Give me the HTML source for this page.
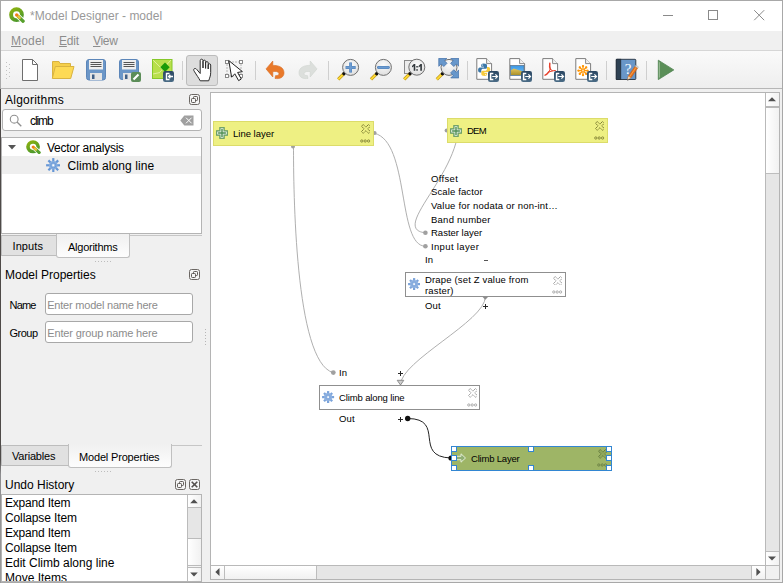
<!DOCTYPE html>
<html>
<head>
<meta charset="utf-8">
<title>Model Designer</title>
<style>
html,body{margin:0;padding:0;}
body{width:783px;height:583px;overflow:hidden;background:#f0f0f0;font-family:"Liberation Sans",sans-serif;font-size:12px;color:#000;position:relative;}
.abs{position:absolute;}
.t{position:absolute;white-space:nowrap;line-height:14px;font-size:12px;}
#win{position:absolute;left:0;top:0;width:783px;height:583px;box-sizing:border-box;border:1px solid #a8a8a8;}
#titlebar{position:absolute;left:1px;top:1px;width:781px;height:30px;background:#fff;}
#menubar{position:absolute;left:1px;top:31px;width:781px;height:19px;background:#f0f0f0;}
#toolbar{position:absolute;left:1px;top:50px;width:781px;height:39px;background:linear-gradient(#fafafa,#eeeeee);border-bottom:1px solid #b6b6b6;border-top:1px solid #d6d6d6;box-sizing:border-box;}
.menu{color:#8c8c8c;}
.sep{position:absolute;top:61px;width:1px;height:19px;background:#cfcfcf;}
.ico{position:absolute;top:58px;width:24px;height:24px;}
.panelwhite{position:absolute;background:#fff;border:1px solid #a9a9a9;box-sizing:border-box;}
.tab{position:absolute;box-sizing:border-box;border:1px solid #bdbdbd;text-align:center;font-size:12px;line-height:14px;}
.tab.off{background:#e1e1e1;border-color:#bdbdbd;}
.tab.on{background:#f6f6f6;border-bottom:none;border-radius:2px 2px 0 0;}
.le{position:absolute;box-sizing:border-box;border:1px solid #a8a8a8;border-radius:3px;background:#fff;}
.ct{position:absolute;white-space:nowrap;font-size:9.5px;line-height:12px;color:#000;}
.hd{position:absolute;width:6px;height:6px;box-sizing:border-box;border:1px solid #3286d2;background:#fff;}
</style>
</head>
<body>
<div id="win"></div>
<div id="titlebar"></div>
<div id="menubar"></div>
<div id="toolbar"></div>
<div class="abs" style="left:0;top:89px;width:1px;height:494px;background:linear-gradient(#4e4a48 0,#4e4a48 75%,#8e8e90 78%,#9a9a9a 100%)"></div>

<!-- TITLE -->
<svg class="abs" style="left:9px;top:7px" width="16" height="16" viewBox="0 0 16 16"><defs><linearGradient id="qg1" x1="0" y1="0" x2="0.600" y2="1"><stop offset="0" stop-color="#8bb111"/><stop offset="1" stop-color="#4f9a2a"/></linearGradient></defs>
  <circle cx="7.500" cy="7.700" r="5.400" fill="none" stroke="url(#qg1)" stroke-width="3.900"/>
  <path d="M8 8.200 L14.300 14.300" stroke="#fff" stroke-width="5" stroke-linecap="butt"/>
  <path d="M9.400 9.600 L14.100 14.200" stroke="#57a02c" stroke-width="3.300" stroke-linecap="round"/>
  <path d="M8.300 8.500 L10.600 10.800" stroke="#e9c53a" stroke-width="2.600" stroke-linecap="round"/>
  <circle cx="7.700" cy="7.900" r="1.700" fill="#f07d16"/>
</svg>
<div class="t" id="title" style="left:30px;top:9px;color:#999;">*Model Designer - model</div>
<!-- window controls -->
<div class="abs" style="left:663px;top:15px;width:10px;height:1px;background:#8a8a8a"></div>
<div class="abs" style="left:708px;top:10px;width:10px;height:10px;box-sizing:border-box;border:1px solid #8a8a8a"></div>
<svg class="abs" style="left:753px;top:9px" width="12" height="12" viewBox="0 0 12 12"><path d="M1.2 1.2 L11.2 11.2 M11.2 1.2 L1.2 11.2" stroke="#8a8a8a" stroke-width="1" fill="none"/></svg>

<!-- MENU -->
<div class="t menu" id="m1" style="left:11px;top:34px;letter-spacing:0.18px;"><u>M</u>odel</div>
<div class="t menu" id="m2" style="left:59px;top:34px;letter-spacing:-0.2px;"><u>E</u>dit</div>
<div class="t menu" id="m3" style="left:93px;top:34px;letter-spacing:-0.33px;"><u>V</u>iew</div>


<!-- toolbar grip -->
<svg class="abs" style="left:6px;top:61px" width="5" height="18" viewBox="0 0 5 18">
<g fill="#c2c2c2"><rect x="0" y="1" width="1" height="1"/><rect x="0" y="5" width="1" height="1"/><rect x="0" y="9" width="1" height="1"/><rect x="0" y="13" width="1" height="1"/><rect x="0" y="17" width="1" height="1"/>
<rect x="3" y="3" width="1" height="1"/><rect x="3" y="7" width="1" height="1"/><rect x="3" y="11" width="1" height="1"/><rect x="3" y="15" width="1" height="1"/></g></svg>

<!-- new -->
<svg class="ico" style="left:18px" viewBox="0 0 24 24"><path d="M4.5 1.5 H14.5 L19.5 6.5 V22.5 H4.5 Z" fill="#fff" stroke="#6e6e6e" stroke-width="1"/><path d="M14.5 1.5 V6.5 H19.5" fill="none" stroke="#6e6e6e" stroke-width="1"/></svg>
<!-- open -->
<svg class="ico" style="left:51px" viewBox="0 0 24 24"><path d="M1.5 20 V3.5 H8 L9 5.5 H19.5 V9" fill="#f5cf4a" stroke="#d9b341" stroke-width="1"/><path d="M1.3 20.5 L4.3 8.5 H23 L19.7 20.5 Z" fill="#fdda55" stroke="#d9b341" stroke-width="1" stroke-linejoin="round"/></svg>
<!-- save -->
<svg class="ico" style="left:84px" viewBox="0 0 24 24"><rect x="2.5" y="1.5" width="19" height="20.5" rx="2.5" fill="#6b96c7" stroke="#5c86b9"/><rect x="5" y="2" width="14" height="9.5" fill="#efefef"/><path d="M6.5 4.5 H17.5 M6.5 6.5 H17.5 M6.5 8.5 H17.5" stroke="#555" stroke-width="1"/><rect x="6" y="15" width="12" height="7" fill="#e4e4e4"/><rect x="8" y="16.5" width="2.5" height="4.5" fill="#3f5f86"/></svg>
<!-- save as -->
<svg class="ico" style="left:117px" viewBox="0 0 24 24"><rect x="2.5" y="1.5" width="19" height="20" rx="2.5" fill="#6b96c7" stroke="#5c86b9"/><rect x="5" y="2" width="14" height="9.5" fill="#efefef"/><path d="M6.5 4.5 H17.5 M6.5 6.5 H17.5 M6.5 8.5 H17.5" stroke="#555" stroke-width="1"/><rect x="6" y="15" width="12" height="7" fill="#e4e4e4"/><rect x="8" y="16.5" width="2.5" height="4.5" fill="#3f5f86"/><rect x="14" y="14" width="10" height="10" rx="2" fill="#5b8d58"/><path d="M16.5 21.5 L21.5 16.5" stroke="#fff" stroke-width="2.2"/></svg>
<!-- save in project -->
<svg class="ico" style="left:150px" viewBox="0 0 24 24"><rect x="2.5" y="1.5" width="19.5" height="19" fill="#b8df4c" stroke="#86c82a"/><path d="M3 2 L14 13 M3 16 L10 14.5 M21 2 L10 14" stroke="#dff09a" stroke-width="1" fill="none"/><path d="M15 4.5 L19.7 9.2 L15 13.9 L10.3 9.2 Z" fill="#1a9a08"/><rect x="13" y="13" width="11" height="11" rx="2.200" fill="url(#bdg)"/><path d="M19.5 15.5 H16.5 V21.5 H19.5" stroke="#fff" stroke-width="1.4" fill="none"/><path d="M23 18.5 H18.8 M20.3 16.8 L18.6 18.5 L20.3 20.2" stroke="#fff" stroke-width="1.3" fill="none"/></svg>
<div class="sep" style="left:182px"></div>
<!-- pan (active) -->
<div class="abs" style="left:186px;top:55px;width:32px;height:31px;box-sizing:border-box;border:1px solid #bcbcbc;border-radius:3px;background:#dddddd"></div>
<svg class="ico" style="left:190px" viewBox="0 0 24 24"><path d="M10.2 12 V2.6 C10.2 0.7 13 0.7 13 2.6 V10 V3.4 C13 1.7 15.6 1.7 15.6 3.4 V10.4 V4.8 C15.6 3.2 18.2 3.2 18.2 4.8 V11 V7 C18.2 5.4 20.7 5.4 20.7 7 V14.5 C20.7 18 19.5 20 18.7 22.8 H10.2 C8.8 20 6.5 17 4.2 13.2 C2.6 10.8 5.3 9.4 6.9 11.6 L10.2 15.5 Z" fill="#fff" stroke="#2a2a2a" stroke-width="1" stroke-linejoin="round"/></svg>
<!-- select -->
<svg class="ico" style="left:223px" viewBox="0 0 24 24"><path d="M6.500 4 H16 M18 6.500 V16 M4 6.500 V16 M6.500 18 H12" stroke="#777" stroke-width="1" stroke-dasharray="1 2" fill="none"/><g fill="#fff" stroke="#7d7d7d" stroke-width="0.900"><rect x="2.500" y="2.500" width="3" height="3"/><rect x="16.500" y="2.500" width="3" height="3"/><rect x="2.500" y="16.500" width="3" height="3"/><rect x="16.500" y="16.500" width="3" height="3"/></g><path d="M5.800 2.600 L8.600 19.200 L11.800 15.800 L15.600 22.600 L18.300 21 L14.600 14.500 L19.400 13.600 Z" fill="#fff" stroke="#222" stroke-width="1" stroke-linejoin="round"/></svg>
<div class="sep" style="left:255px"></div>
<!-- undo -->
<svg class="ico" style="left:263px" viewBox="0 0 24 24"><path d="M9.800 3 L3 10.900 L9.800 19 V13.600 C12.500 13.200 15.600 13.400 15.900 15.400 C16 17 14.600 17.800 12.600 17.600 L12 20.400 C16.500 21.300 21 19.500 21 14.800 C21 9.500 16 7.200 9.800 7.400 Z" fill="#e9792a" stroke="#d96c22" stroke-width="0.6" stroke-linejoin="round"/></svg>
<!-- redo -->
<svg class="ico" style="left:296px" viewBox="0 0 24 24"><path d="M14.2 3 L21 10.9 L14.2 19 V13.6 C11.5 13.2 8.4 13.4 8.1 15.4 C8 17 9.4 17.8 11.4 17.6 L12 20.4 C7.5 21.3 3 19.5 3 14.8 C3 9.5 8 7.2 14.2 7.4 Z" fill="#dcdfdc" stroke="#cfd3cf" stroke-width="0.6" stroke-linejoin="round"/></svg>
<div class="sep" style="left:328px"></div>


<svg width="0" height="0" class="abs"><defs><linearGradient id="bdg" x1="0" y1="0" x2="0" y2="1"><stop offset="0" stop-color="#2a4662"/><stop offset="1" stop-color="#4a6c86"/></linearGradient><radialGradient id="lg" cx="0.5" cy="0.35" r="0.7"><stop offset="0" stop-color="#fbfbfb"/><stop offset="1" stop-color="#dcdcdc"/></radialGradient></defs></svg>
<!-- zoom in -->
<svg class="ico" style="left:336px" viewBox="0 0 24 24"><path d="M7.9 15.7 L2.2 21.4" stroke="#b8900f" stroke-width="3.100" stroke-linecap="butt"/><path d="M7.9 15.7 L2.2 21.4" stroke="#fdd835" stroke-width="2" stroke-linecap="butt"/><circle cx="7.9" cy="15.7" r="1.7" fill="#111"/><circle cx="14.6" cy="9.4" r="8" fill="url(#lg)" stroke="#6f6f6f" stroke-width="1"/><path d="M9.600 9.500 H19.600 M14.600 4.500 V14.500" stroke="#4d7fb8" stroke-width="2.800"/><path d="M9.900 9.500 H19.300 M14.600 4.800 V14.200" stroke="#6c9bd0" stroke-width="1.800"/></svg>
<!-- zoom out -->
<svg class="ico" style="left:369px" viewBox="0 0 24 24"><path d="M7.7 15.7 L2 21.4" stroke="#b8900f" stroke-width="3.100" stroke-linecap="butt"/><path d="M7.7 15.7 L2 21.4" stroke="#fdd835" stroke-width="2" stroke-linecap="butt"/><circle cx="7.7" cy="15.7" r="1.7" fill="#111"/><circle cx="14.4" cy="9.4" r="8" fill="url(#lg)" stroke="#6f6f6f" stroke-width="1"/><path d="M9.400 9.500 H19.400" stroke="#4d7fb8" stroke-width="2.800" stroke-linecap="round"/><path d="M9.600 9.500 H19.200" stroke="#6c9bd0" stroke-width="1.800" stroke-linecap="round"/></svg>
<!-- zoom actual -->
<svg class="ico" style="left:402px" viewBox="0 0 24 24"><rect x="2.5" y="2.5" width="9" height="13" fill="#ececec" stroke="#8a8a8a"/><path d="M8 15.7 L2.2 21.4" stroke="#b8900f" stroke-width="3.100" stroke-linecap="butt"/><path d="M8 15.7 L2.2 21.4" stroke="#fdd835" stroke-width="2" stroke-linecap="butt"/><circle cx="8" cy="15.7" r="1.7" fill="#111"/><circle cx="14.8" cy="9.2" r="8" fill="url(#lg)" stroke="#6f6f6f" stroke-width="1"/><path d="M10.0 8.0 L11.9 6.1 H13.3 V12.7 H11.7 V8.2 L10.0 9.4 Z M16.6 8.0 L18.5 6.1 H19.9 V12.7 H18.3 V8.2 L16.6 9.4 Z" fill="#30363a"/><rect x="14.300" y="8" width="1.500" height="1.500" fill="#30363a"/><rect x="14.300" y="11.200" width="1.500" height="1.500" fill="#30363a"/></svg>
<!-- zoom full -->
<svg class="ico" style="left:435px" viewBox="0 0 24 24"><path d="M7.5 15.7 L1.8 21.4" stroke="#b8900f" stroke-width="3.100" stroke-linecap="butt"/><path d="M7.5 15.7 L1.8 21.4" stroke="#fdd835" stroke-width="2" stroke-linecap="butt"/><circle cx="7.5" cy="15.7" r="1.7" fill="#111"/><circle cx="14" cy="9.4" r="8" fill="url(#lg)" stroke="#6f6f6f" stroke-width="1"/><g fill="#6797cb" stroke="#4874ab" stroke-width="0.800" stroke-linejoin="round"><path d="M3.8 0.3 L11.8 0.3 L9.4 2.7 L12.0 5.3 L8.8 8.5 L6.2 5.9 L3.8 8.3 Z"/><path d="M23.8 0.3 L15.8 0.3 L18.2 2.7 L15.6 5.3 L18.8 8.5 L21.4 5.9 L23.8 8.3 Z"/><path d="M23.8 19.9 L15.8 19.9 L18.2 17.5 L15.6 14.9 L18.8 11.7 L21.4 14.3 L23.8 11.9 Z"/></g></svg>
<div class="sep" style="left:467px"></div>
<!-- export python -->
<svg class="ico" style="left:475px" viewBox="0 0 24 24"><path d="M1.800 0.600 H11.600 L16.600 5.600 V21.300 H1.800 Z" fill="#fff" stroke="#7d7d7d" stroke-width="1"/><path d="M11.600 0.600 V5.600 H16.600" fill="#f2f2f2" stroke="#7d7d7d" stroke-width="0.900"/><path d="M8.700 5.500 C6.300 5.500 6.200 6.600 6.200 7.400 V8.800 H9 V9.400 H5 C3.300 9.400 3.100 11 3.100 12 C3.100 13.200 3.500 14.600 5 14.600 H6.300 V12.600 C6.300 11.400 7.200 10.800 8.200 10.800 H10.600 C11.600 10.800 12 10 12 9.200 V7.400 C12 6.200 11 5.500 8.700 5.500 Z" fill="#3b77a8"/><path d="M9.600 18 C12 18 12.100 16.900 12.100 16.100 V14.700 H9.300 V14.100 H13.300 C15 14.100 15.200 12.500 15.200 11.500 C15.200 10.300 14.800 8.900 13.300 8.900 H12 V10.900 C12 12.100 11.100 12.700 10.100 12.700 H7.700 C6.700 12.700 6.300 13.500 6.300 14.300 V16.100 C6.300 17.300 7.300 18 9.600 18 Z" fill="#f7cb3e"/><circle cx="7.600" cy="7" r="0.600" fill="#fff"/><circle cx="10.700" cy="16.500" r="0.600" fill="#fff"/><rect x="13" y="13" width="11" height="11" rx="2.200" fill="url(#bdg)"/><path d="M18.3 15.6 H15.6 V21.4 H18.3" stroke="#fff" stroke-width="1.5" fill="none"/><path d="M17.2 18.5 H22.4 M20.4 16.4 L22.5 18.5 L20.4 20.6" stroke="#fff" stroke-width="1.2" fill="none"/></svg>
<!-- export image -->
<svg class="ico" style="left:508px" viewBox="0 0 24 24"><path d="M1.800 0.600 H11.600 L16.600 5.600 V21.300 H1.800 Z" fill="#fff" stroke="#7d7d7d" stroke-width="1"/><path d="M11.600 0.600 V5.600 H16.600" fill="#f2f2f2" stroke="#7d7d7d" stroke-width="0.900"/><defs><linearGradient id="sky" x1="0" y1="0" x2="0" y2="1"><stop offset="0" stop-color="#3a97e6"/><stop offset="1" stop-color="#7fc4f3"/></linearGradient><linearGradient id="land" x1="0" y1="0" x2="0" y2="1"><stop offset="0" stop-color="#e6c65c"/><stop offset="1" stop-color="#a8912c"/></linearGradient></defs><rect x="2.500" y="7.500" width="13.500" height="10" fill="url(#sky)" stroke="#5b7895" stroke-width="0.800"/><path d="M2.900 12.300 L5.800 10.400 L15.600 13.800 V17.100 H2.900 Z" fill="url(#land)"/><rect x="13" y="13" width="11" height="11" rx="2.200" fill="url(#bdg)"/><path d="M18.3 15.6 H15.6 V21.4 H18.3" stroke="#fff" stroke-width="1.5" fill="none"/><path d="M17.2 18.5 H22.4 M20.4 16.4 L22.5 18.5 L20.4 20.6" stroke="#fff" stroke-width="1.2" fill="none"/></svg>
<!-- export pdf -->
<svg class="ico" style="left:541px" viewBox="0 0 24 24"><path d="M1.800 0.600 H11.600 L16.600 5.600 V21.300 H1.800 Z" fill="#fff" stroke="#7d7d7d" stroke-width="1"/><path d="M11.600 0.600 V5.600 H16.600" fill="#f2f2f2" stroke="#7d7d7d" stroke-width="0.900"/><g fill="none" stroke="#e8412c" stroke-linecap="round" stroke-linejoin="round"><path d="M8.800 5.300 C8.500 7.200 8.700 9.600 9.300 11.300" stroke-width="1.500"/><path d="M9.300 11.300 L7.700 14 L11 13 Z" stroke-width="1"/><path d="M7.700 14 C6.500 15.600 5.300 16.800 4.100 17.200" stroke-width="1.400"/><path d="M11 13 C12.400 12.500 13.400 12.400 14.400 12.500" stroke-width="1.100"/></g><rect x="13" y="13" width="11" height="11" rx="2.200" fill="url(#bdg)"/><path d="M18.3 15.6 H15.6 V21.4 H18.3" stroke="#fff" stroke-width="1.5" fill="none"/><path d="M17.2 18.5 H22.4 M20.4 16.4 L22.5 18.5 L20.4 20.6" stroke="#fff" stroke-width="1.2" fill="none"/></svg>
<!-- export svg -->
<svg class="ico" style="left:574px" viewBox="0 0 24 24"><path d="M1.800 0.600 H11.600 L16.600 5.600 V21.300 H1.800 Z" fill="#fff" stroke="#7d7d7d" stroke-width="1"/><path d="M11.600 0.600 V5.600 H16.600" fill="#f2f2f2" stroke="#7d7d7d" stroke-width="0.900"/><g stroke="#ff9708" stroke-width="1.300" stroke-linecap="round" fill="#ff9708"><path d="M10.30 12.60 L13.70 12.60"/><circle cx="13.50" cy="12.60" r="0.550" /><path d="M9.92 13.52 L12.32 15.92"/><circle cx="12.18" cy="15.78" r="0.550" /><path d="M9.00 13.90 L9.00 17.30"/><circle cx="9.00" cy="17.10" r="0.550" /><path d="M8.08 13.52 L5.68 15.92"/><circle cx="5.82" cy="15.78" r="0.550" /><path d="M7.70 12.60 L4.30 12.60"/><circle cx="4.50" cy="12.60" r="0.550" /><path d="M8.08 11.68 L5.68 9.28"/><circle cx="5.82" cy="9.42" r="0.550" /><path d="M9.00 11.30 L9.00 7.90"/><circle cx="9.00" cy="8.10" r="0.550" /><path d="M9.92 11.68 L12.32 9.28"/><circle cx="12.18" cy="9.42" r="0.550" /></g><rect x="13" y="13" width="11" height="11" rx="2.200" fill="url(#bdg)"/><path d="M18.3 15.6 H15.6 V21.4 H18.3" stroke="#fff" stroke-width="1.5" fill="none"/><path d="M17.2 18.5 H22.4 M20.4 16.4 L22.5 18.5 L20.4 20.6" stroke="#fff" stroke-width="1.2" fill="none"/></svg>
<div class="sep" style="left:606px"></div>
<!-- help -->
<svg class="ico" style="left:615px" viewBox="0 0 24 24"><rect x="1.300" y="1.300" width="19.500" height="20.200" rx="0.800" fill="#6996c8" stroke="#26313d" stroke-width="0.900"/><rect x="1.300" y="1.300" width="4.400" height="20.200" fill="#2e4153" stroke="#26313d" stroke-width="0.900"/><text x="13" y="15.500" font-family="Liberation Serif, serif" font-size="15" text-anchor="middle" fill="#fff">?</text><path d="M12.600 21.500 L13.300 18.200 L20 8.300 L22.700 10.100 L15.800 20 Z" fill="#e8731c" stroke="#c45a0e" stroke-width="0.500"/><path d="M20 8.300 L20.900 7.100 L23.500 8.900 L22.700 10.100 Z" fill="#d9d9d9" stroke="#9a9a9a" stroke-width="0.400"/><path d="M12.600 21.500 L13.300 18.200 L15.800 20 Z" fill="#e9d6b8"/><path d="M12.200 23 L12.700 20.800 L14.200 21.800 Z" fill="#666"/><path d="M14.500 18.800 L21.200 9.200" stroke="#f6a04e" stroke-width="0.900"/></svg>
<div class="sep" style="left:646px"></div>
<!-- run -->
<svg class="ico" style="left:654px" viewBox="0 0 24 24"><path d="M4.300 2.200 L19.800 11.900 L4.300 21.600 Z" fill="#5b8f58" stroke="#4f8350" stroke-width="0.800" stroke-linejoin="round"/><path d="M5.400 4.200 V19.600" stroke="#a9c8a5" stroke-width="0.800"/></svg>


<!-- Algorithms dock -->
<div class="t" id="l_alg" style="left:5px;top:93px;letter-spacing:0.23px;">Algorithms</div>
<svg class="abs" style="left:189px;top:94px" width="11" height="11" viewBox="0 0 11 11"><rect x="0.500" y="0.500" width="10" height="10" rx="2" fill="#f6f6f6" stroke="#6b6763"/><rect x="4.500" y="2.500" width="4" height="4" rx="0.800" fill="none" stroke="#5e5a56" stroke-width="1"/><rect x="2.500" y="4.500" width="4" height="4" rx="0.800" fill="#f6f6f6" stroke="#5e5a56" stroke-width="1"/></svg>
<div class="le" style="left:2px;top:109px;width:200px;height:22px;border-radius:3px;border-color:#b3b3b3"></div>
<svg class="abs" style="left:9px;top:114px" width="14" height="13" viewBox="0 0 14 13"><circle cx="5.2" cy="5.2" r="3.9" fill="none" stroke="#8f8f8f" stroke-width="1.1"/><path d="M8 8 L12.3 12.2" stroke="#8f8f8f" stroke-width="1.3"/></svg>
<div class="t" id="l_climb" style="left:30px;top:114px;letter-spacing:-1.1px;">climb</div>
<svg class="abs" style="left:179.600px;top:114.500px" width="14" height="11" viewBox="0 0 14 11"><path d="M0.300 5.500 L4.300 0.500 H13.500 V10.500 H4.300 Z" fill="#a0a0a0"/><path d="M6 2.700 L11.600 8.300 M11.600 2.700 L6 8.300" stroke="#fff" stroke-width="1"/></svg>
<div class="panelwhite" style="left:1px;top:137px;width:201px;height:97px;border-color:#b4b4b4"></div>
<div class="abs" style="left:2px;top:156px;width:199px;height:18px;background:#eeeeee"></div>
<svg class="abs" style="left:8px;top:145px" width="8" height="5" viewBox="0 0 8 5"><path d="M0 0 H8 L4 4.500 Z" fill="#555"/></svg>
<svg class="abs" style="left:25.500px;top:139.800px" width="15" height="14.200" viewBox="0 0 16 16" preserveAspectRatio="none"><defs><linearGradient id="qg2" x1="0" y1="0" x2="0.600" y2="1"><stop offset="0" stop-color="#8bb111"/><stop offset="1" stop-color="#4f9a2a"/></linearGradient></defs>
  <circle cx="7.500" cy="7.700" r="5.400" fill="none" stroke="url(#qg2)" stroke-width="3.900"/>
  <path d="M8 8.200 L14.300 14.300" stroke="#fff" stroke-width="5" stroke-linecap="butt"/>
  <path d="M9.400 9.600 L14.100 14.200" stroke="#57a02c" stroke-width="3.300" stroke-linecap="round"/>
  <path d="M8.300 8.500 L10.600 10.800" stroke="#e9c53a" stroke-width="2.600" stroke-linecap="round"/>
  <circle cx="7.700" cy="7.900" r="1.700" fill="#f07d16"/>
</svg>
<div class="t" id="l_va" style="left:47px;top:141px;letter-spacing:-0.26px;">Vector analysis</div>
<svg class="abs" style="left:45.6px;top:157.6px" width="14.6" height="14.6" viewBox="-7.300 -7.300 14.600 14.600"><g stroke="#6596d6" stroke-width="2.200"><path d="M0 -7.200 V7.200"/><path d="M-7.200 0 H7.200"/><path d="M-4.900 -4.900 L4.900 4.900"/><path d="M4.900 -4.900 L-4.900 4.900"/></g><circle r="4.300" fill="#86aee0"/><circle r="2.600" fill="none" stroke="#6b99d5" stroke-width="0.800"/><rect x="-1" y="-1" width="2" height="2" fill="#fff"/></svg>
<div class="t" id="l_cal" style="left:67.600px;top:159px;letter-spacing:0.080px;">Climb along line</div>

<!-- tabs 1 -->
<div class="abs" style="left:130px;top:235px;width:72px;height:1px;background:#c6c6c6"></div>
<div class="tab off" style="left:1px;top:235px;width:56px;height:21px;"></div>
<div class="tab" style="left:56px;top:234px;width:74px;height:24px;background:linear-gradient(#f0f0f0,#fdfdfd);border-top:none;border-radius:0 0 3px 3px;border-color:#c0c0c0"></div>
<div class="t" id="l_inputs" style="left:12.5px;letter-spacing:0.1px;top:239px;font-size:11px;">Inputs</div>
<div class="t" id="l_alg2" style="left:68px;top:240px;font-size:11px;letter-spacing:-0.25px;">Algorithms</div>
<div class="abs dots" style="left:95px;top:261px;width:17px;height:1px;background:repeating-linear-gradient(90deg,#bdbdbd 0 1px,transparent 1px 3px)"></div>

<!-- Model properties dock -->
<div class="t" id="l_mp" style="left:5px;top:268px;">Model Properties</div>
<svg class="abs" style="left:189px;top:269px" width="11" height="11" viewBox="0 0 11 11"><rect x="0.500" y="0.500" width="10" height="10" rx="2" fill="#f6f6f6" stroke="#6b6763"/><rect x="4.500" y="2.500" width="4" height="4" rx="0.800" fill="none" stroke="#5e5a56" stroke-width="1"/><rect x="2.500" y="4.500" width="4" height="4" rx="0.800" fill="#f6f6f6" stroke="#5e5a56" stroke-width="1"/></svg>
<div class="t" id="l_name" style="left:9.5px;top:298px;font-size:11px;letter-spacing:-0.8px;">Name</div>
<div class="le" style="left:45px;top:293px;width:148px;height:22px;"></div>
<div class="t ph" id="l_ph1" style="left:47.2px;top:298px;color:#8c8c8c;font-size:11px;letter-spacing:-0.21px;">Enter model name here</div>
<div class="t" id="l_group" style="left:9.5px;top:326px;font-size:11px;letter-spacing:-0.5px;">Group</div>
<div class="le" style="left:45px;top:321px;width:148px;height:22px;"></div>
<div class="t ph" id="l_ph2" style="left:47.2px;top:326px;color:#8c8c8c;font-size:11px;letter-spacing:-0.13px;">Enter group name here</div>
<div class="abs" style="left:205px;top:329px;width:1px;height:16px;background:repeating-linear-gradient(180deg,#b6b6b6 0 1px,transparent 1px 3px)"></div>

<!-- tabs 2 -->
<div class="abs" style="left:171px;top:445px;width:31px;height:1px;background:#c6c6c6"></div>
<div class="tab off" style="left:1px;top:445px;width:68px;height:21px;"></div>
<div class="tab" style="left:68px;top:444px;width:104px;height:24px;background:linear-gradient(#f0f0f0,#fdfdfd);border-top:none;border-radius:0 0 3px 3px;border-color:#c0c0c0"></div>
<div class="t" id="l_vars" style="left:12px;top:449px;font-size:11px;letter-spacing:-0.2px;">Variables</div>
<div class="t" id="l_mp2" style="left:79px;top:450px;font-size:11px;letter-spacing:-0.17px;">Model Properties</div>
<div class="abs dots" style="left:95px;top:471px;width:17px;height:1px;background:repeating-linear-gradient(90deg,#bdbdbd 0 1px,transparent 1px 3px)"></div>

<!-- Undo History dock -->
<div class="t" id="l_uh" style="left:5px;top:478px;">Undo History</div>
<svg class="abs" style="left:175px;top:479px" width="11" height="11" viewBox="0 0 11 11"><rect x="0.500" y="0.500" width="10" height="10" rx="2" fill="#f6f6f6" stroke="#6b6763"/><rect x="4.500" y="2.500" width="4" height="4" rx="0.800" fill="none" stroke="#5e5a56" stroke-width="1"/><rect x="2.500" y="4.500" width="4" height="4" rx="0.800" fill="#f6f6f6" stroke="#5e5a56" stroke-width="1"/></svg>
<svg class="abs" style="left:189px;top:479px" width="11" height="11" viewBox="0 0 11 11"><rect x="0.500" y="0.500" width="10" height="10" rx="2" fill="#f6f6f6" stroke="#6b6763"/><path d="M2.700 2.700 L8.300 8.300 M8.300 2.700 L2.700 8.300" stroke="#55514e" stroke-width="1.600"/></svg>
<div class="panelwhite" style="left:1px;top:494px;width:201px;height:88px;border-color:#b4b4b4;overflow:hidden"></div>
<div class="t ul" style="left:5px;top:496px;letter-spacing:-0.2px">Expand Item</div>
<div class="t ul" style="left:5px;top:511px;letter-spacing:-0.12px">Collapse Item</div>
<div class="t ul" style="left:5px;top:526px;letter-spacing:-0.2px">Expand Item</div>
<div class="t ul" style="left:5px;top:541px;letter-spacing:-0.12px">Collapse Item</div>
<div class="t ul" style="left:5px;top:556px;">Edit Climb along line</div>
<div class="t ul" style="left:5px;top:571px;height:10px;overflow:hidden">Move Items</div>
<!-- list scrollbar -->
<div class="abs" style="left:188px;top:495px;width:13px;height:86px;background:#e6e6e6"></div>
<div class="abs" style="left:188px;top:495px;width:13px;height:12px;background:linear-gradient(90deg,#fff,#f1f1f1)"></div>
<div class="abs" style="left:188px;top:507px;width:13px;height:1px;background:#bbbbbb"></div>
<div class="abs" style="left:188px;top:538px;width:13px;height:1px;background:#bbbbbb"></div>
<div class="abs" style="left:188px;top:539px;width:13px;height:26px;background:linear-gradient(90deg,#fff,#f1f1f1)"></div>
<div class="abs" style="left:188px;top:565px;width:13px;height:1px;background:#bbbbbb"></div>
<div class="abs" style="left:188px;top:566px;width:13px;height:1px;background:#f4f4f4"></div>
<div class="abs" style="left:188px;top:567px;width:13px;height:1px;background:#bbbbbb"></div>
<div class="abs" style="left:188px;top:568px;width:13px;height:13px;background:linear-gradient(90deg,#fff,#f1f1f1)"></div>
<div class="abs" style="left:187px;top:495px;width:1px;height:86px;background:#bbbbbb"></div>
<svg class="abs" style="left:190px;top:499px" width="8" height="5" viewBox="0 0 8 5"><path d="M0.200 4.300 H7.800 L4 0.300 Z" fill="#505050"/></svg>
<svg class="abs" style="left:190px;top:571.500px" width="8" height="5" viewBox="0 0 8 5"><path d="M0.200 0.500 H7.800 L4 4.500 Z" fill="#505050"/></svg>

<!-- canvas frame -->
<div class="abs" id="frame" style="left:210px;top:92px;width:570px;height:488px;box-sizing:border-box;border:1px solid #b4b4b4;background:#fff"></div>
<!-- vertical scrollbar -->
<div class="abs" style="left:765px;top:93px;width:14px;height:472px;background:#e6e6e6;border-left:1px solid #b9b9b9;box-sizing:border-box"></div>
<div class="abs" style="left:766px;top:93px;width:13px;height:80px;background:linear-gradient(90deg,#fff,#f1f1f1)"></div>
<div class="abs" style="left:766px;top:106px;width:13px;height:2px;background:#b8b8b8"></div>
<div class="abs" style="left:766px;top:173px;width:13px;height:1px;background:#bdbdbd"></div>
<div class="abs" style="left:766px;top:551px;width:13px;height:14px;background:linear-gradient(90deg,#fff,#f1f1f1);border-top:1px solid #bdbdbd;box-sizing:border-box"></div>
<svg class="abs" style="left:768px;top:97px" width="8" height="5" viewBox="0 0 8 5"><path d="M0 4.300 H8 L4 0.200 Z" fill="#505050"/></svg>
<svg class="abs" style="left:768px;top:556px" width="8" height="5" viewBox="0 0 8 5"><path d="M0 0.400 H8 L4 4.500 Z" fill="#505050"/></svg>
<!-- horizontal scrollbar -->
<div class="abs" style="left:211px;top:565px;width:568px;height:14px;background:#e6e6e6;border-top:1px solid #b9b9b9;box-sizing:border-box"></div>
<div class="abs" style="left:211px;top:566px;width:105px;height:13px;background:linear-gradient(#fff,#f1f1f1)"></div>
<div class="abs" style="left:224px;top:566px;width:1px;height:13px;background:#bdbdbd"></div>
<div class="abs" style="left:316px;top:566px;width:1px;height:13px;background:#bdbdbd"></div>
<div class="abs" style="left:751px;top:566px;width:14px;height:13px;background:linear-gradient(#fff,#f1f1f1);border-left:1px solid #bdbdbd;box-sizing:border-box"></div>
<div class="abs" style="left:765px;top:565px;width:14px;height:14px;background:#f0f0f0;border-left:1px solid #b9b9b9;border-top:1px solid #b9b9b9;box-sizing:border-box"></div>
<svg class="abs" style="left:215px;top:568px" width="5" height="8" viewBox="0 0 5 8"><path d="M4.500 0 V8 L0.300 4 Z" fill="#505050"/></svg>
<svg class="abs" style="left:756px;top:568px" width="5" height="8" viewBox="0 0 5 8"><path d="M0.400 0 V8 L4.600 4 Z" fill="#505050"/></svg>

<!-- connectors -->
<svg class="abs" style="left:211px;top:93px" width="554" height="472" viewBox="211 93 554 472">
<g fill="none" stroke="#a6a6a6" stroke-width="0.900">
<path d="M293.500 146 C293.500 187.400, 294.600 362.100, 333 372.500"/>
<path d="M374.500 133.300 C409.800 142, 397.100 246.300, 425.400 246.200"/>
<path d="M455.900 142.900 C443.300 187.900, 394 229.600, 425.400 232.800"/>
<path d="M485.300 297 C485.300 321, 400.400 361, 400.400 385"/>
</g>
<path d="M407.700 418.500 C446.300 418.700, 412.200 456.700, 451 458" fill="none" stroke="#222" stroke-width="1"/>
<g fill="#a0a0a0"><circle cx="293" cy="146.500" r="2"/><circle cx="374.600" cy="133" r="2"/><circle cx="446.600" cy="130.400" r="2"/><circle cx="425.400" cy="232.800" r="2.300"/><circle cx="425.400" cy="246.200" r="2.300"/><circle cx="333.300" cy="372.600" r="2.400"/>
<path d="M482.600 297 H488 L485.300 299.800 Z" fill="#8c8c8c"/><path d="M397.200 380.300 H403.800 L400.500 385 Z" fill="#cfcfcf" stroke="#858585" stroke-width="0.900"/></g>
<g stroke="#2a2a2a" stroke-width="1" fill="none" shape-rendering="crispEdges">
<path d="M484 260.500 H488" stroke="#555"/>
<path d="M483 306.500 H488 M485.500 304 V309"/>
<path d="M398 373.500 H403 M400.500 371 V376"/>
<path d="M398 419.500 H403 M400.500 417 V422"/>
</g>
<circle cx="407.700" cy="418.500" r="2.700" fill="#111"/><circle cx="451" cy="458" r="2.600" fill="#111"/>
</svg>

<!-- Line layer -->
<div class="abs" style="left:213px;top:121px;width:161px;height:25px;box-sizing:border-box;background:#eef083;border:1px solid #dcdc6a"></div>
<svg class="abs" style="left:216.1px;top:127.1px" width="12" height="12" viewBox="0 0 12 12"><path d="M3.6 0.20000000000000018 H8.4 V3.6 H11.8 V8.4 H8.4 V11.8 H3.6 V8.4 H0.20000000000000018 V3.6 H3.6 Z" fill="#5f9865" stroke="#5f9865" stroke-width="0.600" stroke-linejoin="round"/><path d="M4.5 1.2000000000000002 H7.5 V4.5 H10.8 V7.5 H7.5 V10.8 H4.5 V7.5 H1.2000000000000002 V4.5 H4.5 Z" fill="#eef5e8"/><path d="M5.3 2.1 H6.7 V5.3 H9.9 V6.7 H6.7 V9.9 H5.3 V6.7 H2.1 V5.3 H5.3 Z" fill="#4f8f56"/></svg>
<div class="ct" id="c_ll" style="left:233px;top:128px;">Line layer</div>
<svg class="abs xi" style="left:360.6px;top:124.4px" width="9.800" height="9.800" viewBox="0 0 10 10"><path d="M0.500 2.300 L2.300 0.500 L5 3.200 L7.700 0.500 L9.500 2.300 L6.800 5 L9.500 7.700 L7.700 9.500 L5 6.800 L2.300 9.500 L0.500 7.700 L3.200 5 Z" fill="none" stroke="#77772e" stroke-width="1" stroke-dasharray="1.600 0.400"/></svg><svg class="abs oi" style="left:360.2px;top:138.6px" width="10.400" height="4" viewBox="0 0 10.400 4"><g fill="none" stroke="#77772e" stroke-width="0.800"><circle cx="1.800" cy="2" r="1.150"/><circle cx="5.200" cy="2" r="1.150"/><circle cx="8.600" cy="2" r="1.150"/></g></svg>
<!-- DEM -->
<div class="abs" style="left:447px;top:118px;width:161px;height:25px;box-sizing:border-box;background:#eef083;border:1px solid #dcdc6a"></div>
<svg class="abs" style="left:450px;top:124.9px" width="12" height="12" viewBox="0 0 12 12"><path d="M3.6 0.20000000000000018 H8.4 V3.6 H11.8 V8.4 H8.4 V11.8 H3.6 V8.4 H0.20000000000000018 V3.6 H3.6 Z" fill="#5f9865" stroke="#5f9865" stroke-width="0.600" stroke-linejoin="round"/><path d="M4.5 1.2000000000000002 H7.5 V4.5 H10.8 V7.5 H7.5 V10.8 H4.5 V7.5 H1.2000000000000002 V4.5 H4.5 Z" fill="#eef5e8"/><path d="M5.3 2.1 H6.7 V5.3 H9.9 V6.7 H6.7 V9.9 H5.3 V6.7 H2.1 V5.3 H5.3 Z" fill="#4f8f56"/></svg>
<div class="ct" id="c_dem" style="left:467px;top:125px;letter-spacing:-0.77px;">DEM</div>
<svg class="abs xi" style="left:594.6px;top:121.4px" width="9.800" height="9.800" viewBox="0 0 10 10"><path d="M0.500 2.300 L2.300 0.500 L5 3.200 L7.700 0.500 L9.500 2.300 L6.800 5 L9.500 7.700 L7.700 9.500 L5 6.800 L2.300 9.500 L0.500 7.700 L3.200 5 Z" fill="none" stroke="#77772e" stroke-width="1" stroke-dasharray="1.600 0.400"/></svg><svg class="abs oi" style="left:594.2px;top:136.200px" width="10.400" height="4" viewBox="0 0 10.400 4"><g fill="none" stroke="#77772e" stroke-width="0.800"><circle cx="1.800" cy="2" r="1.150"/><circle cx="5.200" cy="2" r="1.150"/><circle cx="8.600" cy="2" r="1.150"/></g></svg>
<!-- Drape params -->
<div class="ct" id="c_p1" style="left:431px;top:173px;letter-spacing:0.33px;">Offset</div>
<div class="ct" id="c_p2" style="left:431px;top:186px;letter-spacing:0.13px;">Scale factor</div>
<div class="ct" id="c_p3" style="left:431px;top:200px;letter-spacing:0.2px;">Value for nodata or non-int…</div>
<div class="ct" id="c_p4" style="left:431px;top:214px;letter-spacing:0.25px;">Band number</div>
<div class="ct" id="c_p5" style="left:431px;top:227px;">Raster layer</div>
<div class="ct" id="c_p6" style="left:431px;top:241px;letter-spacing:0.35px;">Input layer</div>
<div class="ct" id="c_in1" style="left:425px;top:254px;">In</div>
<div class="abs" style="left:405px;top:272px;width:161px;height:25px;box-sizing:border-box;background:#fff;border:1px solid #8f8f8f"></div>
<svg class="abs" style="left:408.100px;top:277.900px" width="12.200" height="12.200" viewBox="-7.300 -7.300 14.600 14.600"><g stroke="#7aa3da" stroke-width="2.700"><path d="M0 -7.200 V7.200"/><path d="M-7.200 0 H7.200"/><path d="M-4.900 -4.900 L4.900 4.900"/><path d="M4.900 -4.900 L-4.900 4.900"/></g><circle r="4.800" fill="#8eb1e0"/><circle r="2.800" fill="none" stroke="#7fa6db" stroke-width="0.800"/><rect x="-1" y="-1" width="2" height="2" fill="#fff"/></svg>
<div class="ct" id="c_dr1" style="left:425px;top:274px;line-height:11px;letter-spacing:0.16px;">Drape (set Z value from<br>raster)</div>
<svg class="abs xi" style="left:552.5px;top:275.500px" width="9.800" height="9.800" viewBox="0 0 10 10"><path d="M0.500 2.300 L2.300 0.500 L5 3.200 L7.700 0.500 L9.500 2.300 L6.800 5 L9.500 7.700 L7.700 9.500 L5 6.800 L2.300 9.500 L0.500 7.700 L3.200 5 Z" fill="none" stroke="#9a9a9a" stroke-width="1" stroke-dasharray="1.600 0.400"/></svg><svg class="abs oi" style="left:552.2px;top:289.6px" width="10.400" height="4" viewBox="0 0 10.400 4"><g fill="none" stroke="#9a9a9a" stroke-width="0.800"><circle cx="1.800" cy="2" r="1.150"/><circle cx="5.200" cy="2" r="1.150"/><circle cx="8.600" cy="2" r="1.150"/></g></svg>
<div class="ct" id="c_out1" style="left:425px;top:300px;letter-spacing:0.13px;">Out</div>
<!-- Climb along line -->
<div class="ct" id="c_in2" style="left:339px;top:367px;">In</div>
<div class="abs" style="left:319px;top:385px;width:161px;height:25px;box-sizing:border-box;background:#fff;border:1px solid #8f8f8f"></div>
<svg class="abs" style="left:322.400px;top:390.900px" width="12.200" height="12.200" viewBox="-7.300 -7.300 14.600 14.600"><g stroke="#7aa3da" stroke-width="2.700"><path d="M0 -7.200 V7.200"/><path d="M-7.200 0 H7.200"/><path d="M-4.900 -4.900 L4.900 4.900"/><path d="M4.900 -4.900 L-4.900 4.900"/></g><circle r="4.800" fill="#8eb1e0"/><circle r="2.800" fill="none" stroke="#7fa6db" stroke-width="0.800"/><rect x="-1" y="-1" width="2" height="2" fill="#fff"/></svg>
<div class="ct" id="c_cal" style="left:339px;top:392px;letter-spacing:-0.13px;">Climb along line</div>
<svg class="abs xi" style="left:467.6px;top:388.4px" width="9.800" height="9.800" viewBox="0 0 10 10"><path d="M0.500 2.300 L2.300 0.500 L5 3.200 L7.700 0.500 L9.500 2.300 L6.800 5 L9.500 7.700 L7.700 9.500 L5 6.800 L2.300 9.500 L0.500 7.700 L3.200 5 Z" fill="none" stroke="#9a9a9a" stroke-width="1" stroke-dasharray="1.600 0.400"/></svg><svg class="abs oi" style="left:467.2px;top:402.6px" width="10.400" height="4" viewBox="0 0 10.400 4"><g fill="none" stroke="#9a9a9a" stroke-width="0.800"><circle cx="1.800" cy="2" r="1.150"/><circle cx="5.200" cy="2" r="1.150"/><circle cx="8.600" cy="2" r="1.150"/></g></svg>
<div class="ct" id="c_out2" style="left:339px;top:413px;letter-spacing:0.13px;">Out</div>
<!-- Climb Layer output -->
<div class="abs" style="left:451px;top:446px;width:161px;height:25px;box-sizing:border-box;background:#9eb566;border:1px solid #3286d2"></div>
<svg class="abs" style="left:456px;top:453px" width="10" height="10" viewBox="0 0 10 10"><path d="M0.500 3.300 H5 V0.800 L9.500 5 L5 9.200 V6.700 H0.500 Z" fill="#8fae72" stroke="#e3edd6" stroke-width="1" stroke-linejoin="round"/></svg>
<div class="ct" id="c_cl" style="left:471px;top:453px;letter-spacing:-0.2px;">Climb Layer</div>
<svg class="abs xi" style="left:597.6px;top:449.4px" width="9.800" height="9.800" viewBox="0 0 10 10"><path d="M0.500 2.300 L2.300 0.500 L5 3.200 L7.700 0.500 L9.500 2.300 L6.800 5 L9.500 7.700 L7.700 9.500 L5 6.800 L2.300 9.500 L0.500 7.700 L3.200 5 Z" fill="#8fa75c" stroke="#647a40" stroke-width="1" stroke-dasharray="1.600 0.400"/></svg><svg class="abs oi" style="left:597.2px;top:463.300px" width="10.400" height="4" viewBox="0 0 10.400 4"><g fill="none" stroke="#647a40" stroke-width="0.800"><circle cx="1.800" cy="2" r="1.150"/><circle cx="5.200" cy="2" r="1.150"/><circle cx="8.600" cy="2" r="1.150"/></g></svg>
<div class="hd" style="left:451px;top:446px"></div><div class="hd" style="left:528px;top:446px"></div><div class="hd" style="left:606px;top:446px"></div>
<div class="hd" style="left:451px;top:455px"></div><div class="hd" style="left:606px;top:455px"></div>
<div class="hd" style="left:451px;top:465px"></div><div class="hd" style="left:528px;top:465px"></div><div class="hd" style="left:606px;top:465px"></div>

</body>
</html>
